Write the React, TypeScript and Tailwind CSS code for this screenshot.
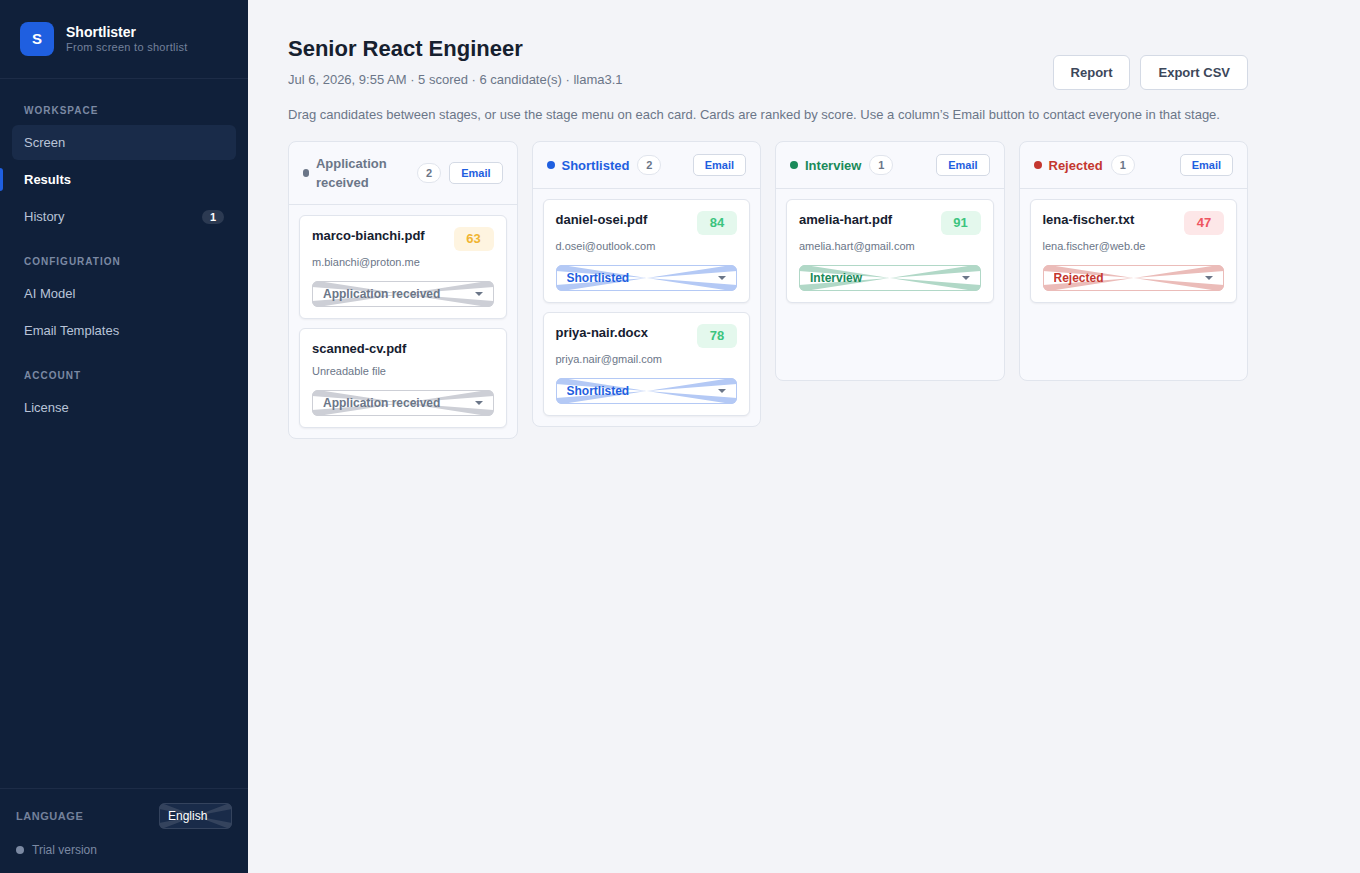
import { useState } from "react";
import clsx from "clsx";

type StageId = "received" | "shortlisted" | "interview" | "rejected";

interface Candidate {
  file: string;
  note: string;
  score?: number;
  stage: StageId;
}

interface Stage {
  id: StageId;
  label: string;
  text: string;
  dot: string;
  border: string;
  fill: string;
}

const STAGES: Stage[] = [
  {
    id: "received",
    label: "Application received",
    text: "text-[#6b7688]",
    dot: "bg-[#6b7688]",
    border: "border-[#cdcfd6]",
    fill: "fill-[#cdcfd6]",
  },
  {
    id: "shortlisted",
    label: "Shortlisted",
    text: "text-[#1f5fe0]",
    dot: "bg-[#1f5fe0]",
    border: "border-[#b4c9f5]",
    fill: "fill-[#b4c9f5]",
  },
  {
    id: "interview",
    label: "Interview",
    text: "text-[#1a8a5a]",
    dot: "bg-[#1a8a5a]",
    border: "border-[#b1d8c7]",
    fill: "fill-[#b1d8c7]",
  },
  {
    id: "rejected",
    label: "Rejected",
    text: "text-[#c4372f]",
    dot: "bg-[#c4372f]",
    border: "border-[#ebbcb9]",
    fill: "fill-[#ebbcb9]",
  },
];

const CANDIDATES: Candidate[] = [
  { file: "marco-bianchi.pdf", note: "m.bianchi@proton.me", score: 63, stage: "received" },
  { file: "scanned-cv.pdf", note: "Unreadable file", stage: "received" },
  { file: "daniel-osei.pdf", note: "d.osei@outlook.com", score: 84, stage: "shortlisted" },
  { file: "priya-nair.docx", note: "priya.nair@gmail.com", score: 78, stage: "shortlisted" },
  { file: "amelia-hart.pdf", note: "amelia.hart@gmail.com", score: 91, stage: "interview" },
  { file: "lena-fischer.txt", note: "lena.fischer@web.de", score: 47, stage: "rejected" },
];

const NAV = [
  { title: "Workspace", items: ["Screen", "Results", "History"] },
  { title: "Configuration", items: ["AI Model", "Email Templates"] },
  { title: "Account", items: ["License"] },
];

const scoreColor = (score: number) => {
  if (score >= 75) return "bg-[#e4f8ed] text-[#3cc47f]";
  if (score >= 50) return "bg-[#fef4e0] text-[#f0b432]";
  return "bg-[#fde7e8] text-[#ee5560]";
};

// four wedges running from the corners to the middle
const Wedges = ({ className }: { className: string }) => (
  <svg
    className={clsx("absolute inset-0 h-full w-full rounded-md", className)}
    viewBox="0 0 182 26"
    preserveAspectRatio="none"
    aria-hidden="true"
  >
    <path d="M0 0H6L91 13L0 6ZM182 0H176L91 13L182 6ZM0 26H6L91 13L0 20ZM182 26H176L91 13L182 20Z" />
  </svg>
);

const Sidebar = () => (
  <aside className="flex w-62 shrink-0 flex-col bg-[#10203a]">
    <div className="flex items-center gap-3 border-b border-[#1d2c47] px-5 py-[22px]">
      <div className="flex size-[34px] items-center justify-center rounded-lg bg-[#1f5fe0] text-[15px] font-bold text-white">
        S
      </div>
      <div>
        <div className="text-sm leading-4 font-bold text-white">Shortlister</div>
        <div className="text-[11px] leading-[14px] tracking-wide text-[#74819a]">
          From screen to shortlist
        </div>
      </div>
    </div>

    <nav className="flex-1 px-3 pt-6">
      {NAV.map((group) => (
        <div key={group.title} className="mb-5">
          <h2 className="mb-1.5 px-3 text-[10px] leading-4 font-bold tracking-widest text-[#7b89a3] uppercase">
            {group.title}
          </h2>
          <ul className="space-y-0.5">
            {group.items.map((item) => (
              <li key={item} className="relative">
                {item === "Results" && (
                  <span className="absolute inset-y-1.5 -left-3 w-[3px] rounded-r-sm bg-[#1f5fe0]" />
                )}
                <a
                  href="#"
                  className={clsx(
                    "flex h-[35px] items-center justify-between rounded-md px-3 text-[13px]",
                    item === "Screen" && "bg-[#192b49]",
                    item === "Results" ? "font-bold text-white" : "text-[#b9c4d8]",
                  )}
                >
                  {item}
                  {item === "History" && (
                    <span className="rounded-full bg-[#2c3a52] px-2 text-[11px] leading-[14px] font-bold text-white">
                      1
                    </span>
                  )}
                </a>
              </li>
            ))}
          </ul>
        </div>
      ))}
    </nav>

    <div className="border-t border-[#1d2c47] px-4 py-3.5">
      <div className="flex items-center justify-between">
        <label
          htmlFor="language"
          className="text-[11px] font-bold tracking-wider text-[#74819a] uppercase"
        >
          Language
        </label>
        <div className="relative h-[26px] w-[73px] rounded-md bg-[#192b49]">
          <Wedges className="fill-[#34435d]" />
          <select
            id="language"
            className="relative h-full w-full appearance-none rounded-md border border-[#34435d] bg-transparent px-2 text-xs text-white"
          >
            <option>English</option>
          </select>
        </div>
      </div>
      <div className="mt-3 flex items-center gap-2 text-xs leading-[18px] text-[#7b89a3]">
        <span className="size-2 rounded-full bg-[#7b89a3]" />
        Trial version
      </div>
    </div>
  </aside>
);

interface CardProps {
  candidate: Candidate;
  stage: Stage;
  onMove: (stage: StageId) => void;
}

const CandidateCard = ({ candidate, stage, onMove }: CardProps) => (
  <article className="rounded-md border border-[#e1e5ed] bg-white px-3 py-[11px] shadow-xs">
    <div className="flex min-h-5 items-start justify-between gap-2">
      <h3 className="text-[13px] leading-[18px] font-bold text-[#16202f]">{candidate.file}</h3>
      {candidate.score !== undefined && (
        <span
          className={clsx(
            "w-10 rounded-md text-center text-[13px] leading-6 font-bold",
            scoreColor(candidate.score),
          )}
        >
          {candidate.score}
        </span>
      )}
    </div>
    <p className="mt-0.5 text-[11px] leading-[18px] text-[#6b7688]">{candidate.note}</p>
    <div className="relative mt-2.5 h-[26px]">
      <Wedges className={stage.fill} />
      <select
        aria-label={`Stage of ${candidate.file}`}
        value={stage.id}
        onChange={(e) => onMove(e.target.value as StageId)}
        className={clsx(
          "relative h-full w-full appearance-none rounded-md border bg-transparent px-2.5 text-xs font-bold",
          stage.text,
          stage.border,
        )}
      >
        {STAGES.map((s) => (
          <option key={s.id} value={s.id}>
            {s.label}
          </option>
        ))}
      </select>
      <svg
        className="pointer-events-none absolute top-[11px] right-[11px] h-1 w-2 fill-[#6b7688]"
        viewBox="0 0 8 4"
        aria-hidden="true"
      >
        <path d="M0 0H8L4 4Z" />
      </svg>
    </div>
  </article>
);

const App = () => {
  const [candidates, setCandidates] = useState(CANDIDATES);

  const move = (file: string, stage: StageId) =>
    setCandidates((prev) => prev.map((c) => (c.file === file ? { ...c, stage } : c)));

  return (
    <div className="flex min-h-screen bg-[#f3f4f8] font-['Liberation_Sans',Arial,sans-serif] text-[#16202f]">
      <Sidebar />
      <main className="min-w-0 flex-1">
        <div className="max-w-[1040px] px-10 pt-9">
          <header className="flex items-end justify-between gap-4">
            <div>
              <h1 className="text-[22px] leading-[26px] font-bold">Senior React Engineer</h1>
              <p className="mt-2 text-[13px] leading-5 text-[#6b7688]">
                Jul 6, 2026, 9:55 AM · 5 scored · 6 candidate(s) · llama3.1
              </p>
            </div>
            <div className="flex gap-2.5">
              {["Report", "Export CSV"].map((label) => (
                <button
                  key={label}
                  className="h-[35px] rounded-md border border-[#d4dae5] bg-white px-[17px] text-[13px] font-bold text-[#3c475a]"
                >
                  {label}
                </button>
              ))}
            </div>
          </header>

          <p className="mt-4 text-[13px] leading-[18px] text-[#6b7688]">
            Drag candidates between stages, or use the stage menu on each card. Cards are ranked by
            score. Use a column’s Email button to contact everyone in that stage.
          </p>

          {/* Board */}
          <div className="mt-[17px] grid grid-cols-4 items-start gap-3.5">
            {STAGES.map((stage) => {
              const cards = candidates.filter((c) => c.stage === stage.id);
              return (
                <section
                  key={stage.id}
                  className="min-h-60 rounded-lg border border-[#e1e5ed] bg-[#f8f9fd]"
                >
                  <div className="flex items-center border-b border-[#e1e5ed] px-3.5 py-3">
                    <span className={clsx("mr-[7px] h-2 w-2 shrink rounded-full", stage.dot)} />
                    <h2 className={clsx("text-[13px] leading-[19px] font-bold", stage.text)}>
                      {stage.label}
                    </h2>
                    <span className="mx-2 w-6 shrink-0 rounded-full border border-[#e1e5ed] bg-white text-center text-[11px] leading-[18px] font-bold text-[#6b7688]">
                      {cards.length}
                    </span>
                    <button className="ml-auto h-[22px] shrink-0 rounded-[5px] border border-[#d4dae5] bg-white px-[11px] text-[11px] font-bold text-[#1f5fe0]">
                      Email
                    </button>
                  </div>
                  <div className="flex flex-col gap-[9px] p-2.5">
                    {cards.map((c) => (
                      <CandidateCard
                        key={c.file}
                        candidate={c}
                        stage={stage}
                        onMove={(next) => move(c.file, next)}
                      />
                    ))}
                  </div>
                </section>
              );
            })}
          </div>
        </div>
      </main>
    </div>
  );
};

export default App;
